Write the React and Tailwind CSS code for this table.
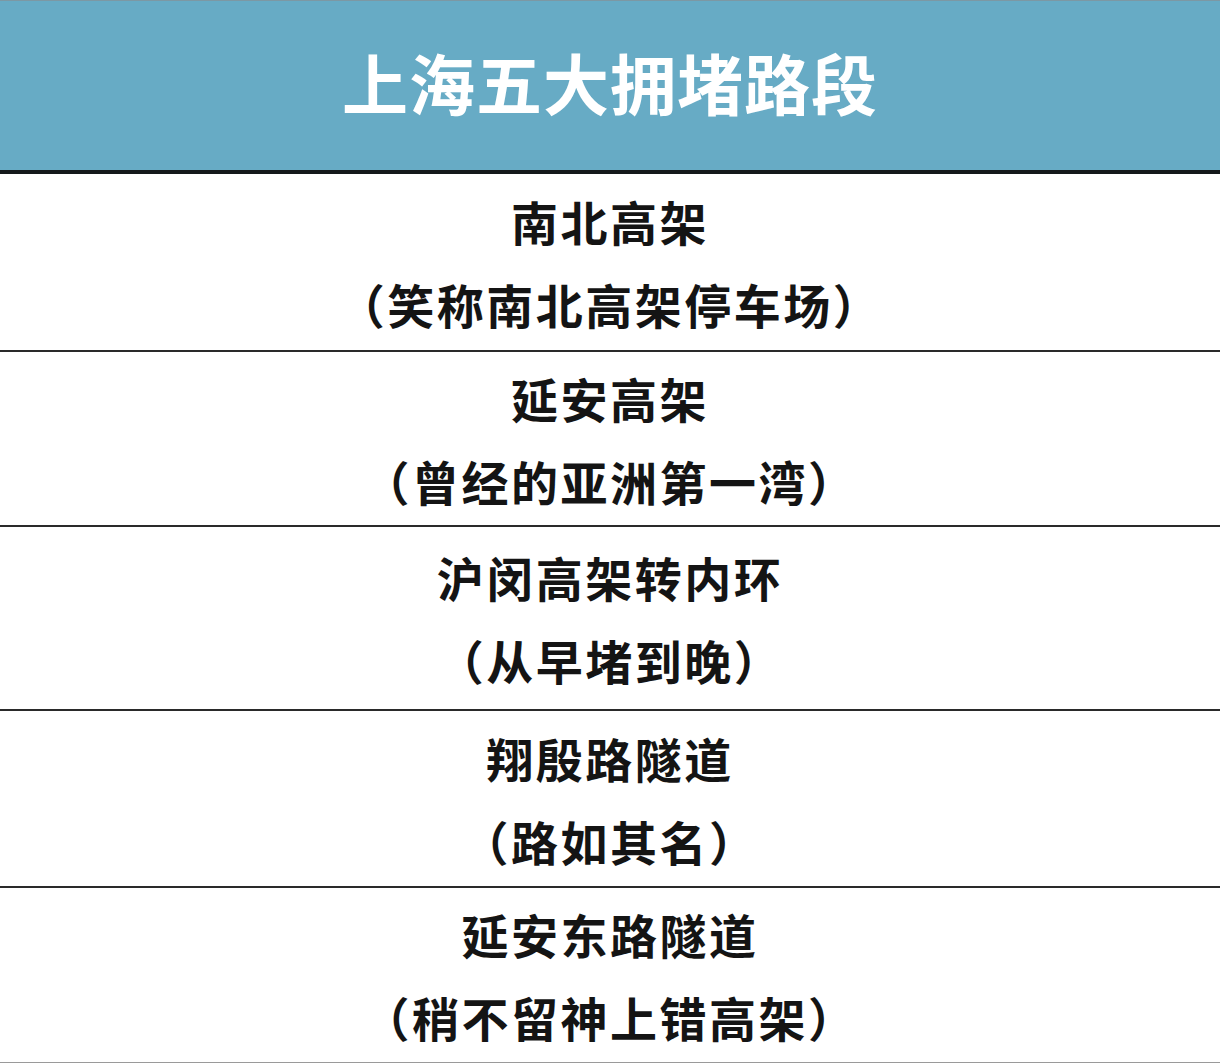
import React from "react";

const rows = [
  { h: "h-[178px]", a: "南北高架", b: "（笑称南北高架停车场）" },
  { h: "h-[175px]", a: "延安高架", b: "（曾经的亚洲第一湾）" },
  { h: "h-[184px]", a: "沪闵高架转内环", b: "（从早堵到晚）" },
  { h: "h-[177px]", a: "翔殷路隧道", b: "（路如其名）" },
];

export default function App() {
  return (
    <div
      className="w-[1220px] h-[1064px] bg-white flex flex-col overflow-hidden"
      style={{ fontFamily: '"Noto Sans CJK SC", "Noto Sans", sans-serif' }}
    >
      <div className="h-[174px] shrink-0 bg-[#67abc5] border-t border-t-[#7c98a4] border-b-4 border-b-[#15191b] flex items-center justify-center pb-[10px]">
        <span className="text-white text-[66px] font-bold leading-none tracking-[1px]">上海五大拥堵路段</span>
      </div>
      {rows.map((r, i) => (
        <div
          key={i}
          className={`${r.h} shrink-0 border-b-2 border-b-[#2a2a2a] flex flex-col items-center justify-center text-[#141414] text-[47px] font-bold tracking-[2.5px]`}
        >
          <div className="leading-[83px]">{r.a}</div>
          <div className="leading-[83px]">{r.b}</div>
        </div>
      ))}
      <div className="h-[175px] shrink-0 border-b border-b-[#9a9a9a] flex flex-col items-center justify-center text-[#141414] text-[47px] font-bold tracking-[2.5px]">
        <div className="leading-[83px]">延安东路隧道</div>
        <div className="leading-[83px]">（稍不留神上错高架）</div>
      </div>
    </div>
  );
}
